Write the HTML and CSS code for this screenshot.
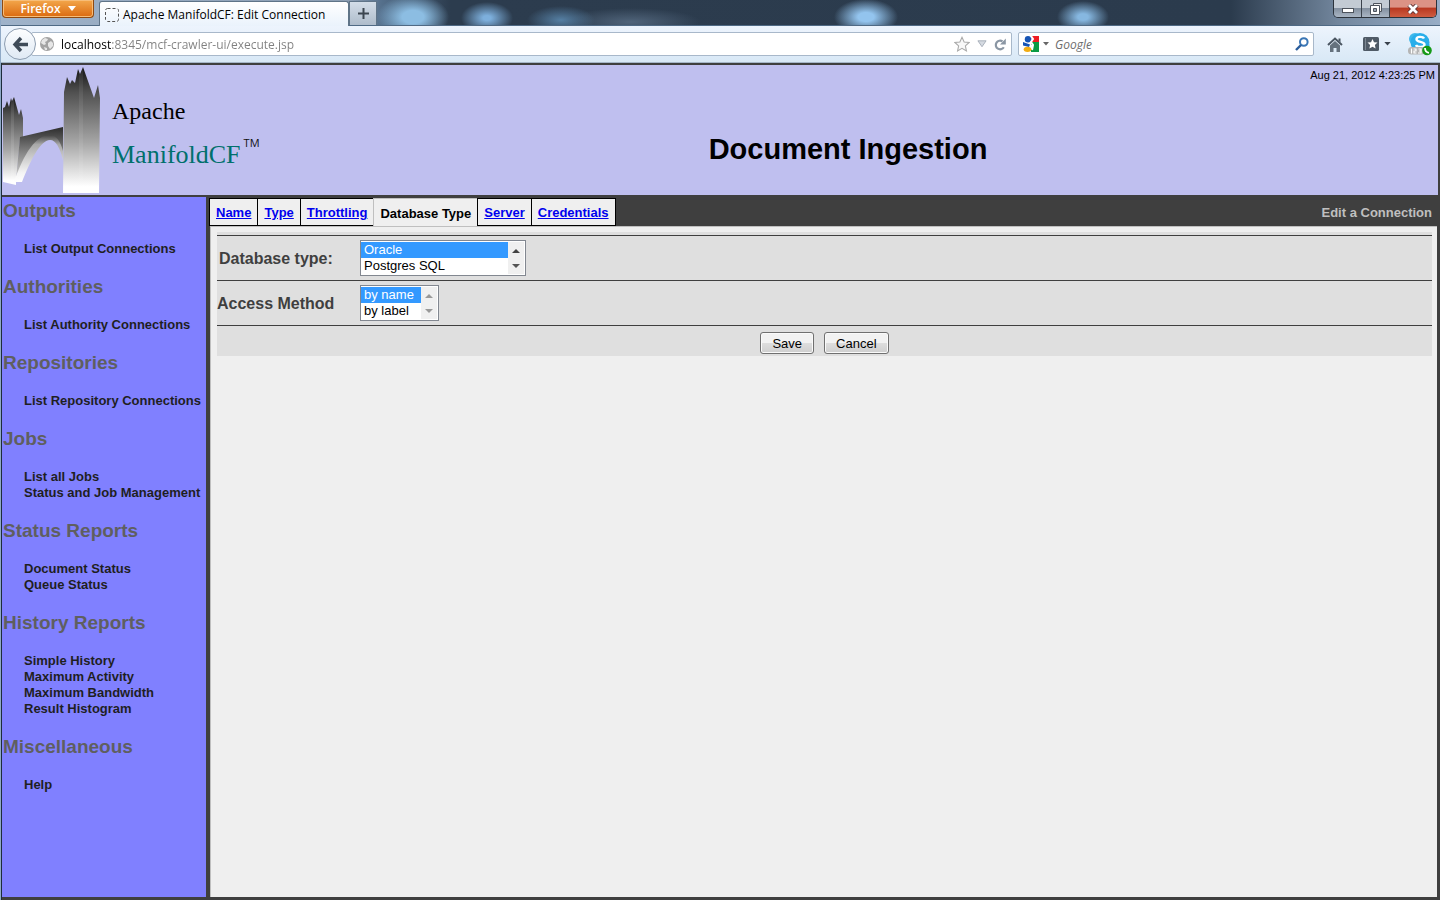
FILE: index.html
```html
<!DOCTYPE html>
<html lang="en">
<head>
<meta charset="utf-8">
<title>Apache ManifoldCF: Edit Connection</title>
<link rel="stylesheet" href="styles.css">
</head>
<body>
<header class="titlebar">
  <button class="firefox" type="button">Firefox
    <svg width="8" height="5" viewBox="0 0 8 5"><path d="M0 0h8L4 5z" fill="#fff"/></svg>
  </button>
  <div class="browser-tab">
    <svg width="14" height="14" viewBox="0 0 14 14"><rect x=".5" y=".5" width="13" height="13" rx="2" fill="none" stroke="#555" stroke-dasharray="3 2"/></svg>
    <span>Apache ManifoldCF: Edit Connection</span>
  </div>
  <button class="new-tab" type="button" aria-label="New tab">
    <svg width="11" height="11" viewBox="0 0 11 11"><path d="M5.5 0v11M0 5.5h11" stroke="#3c4650" stroke-width="2"/></svg>
  </button>
  <div class="window-buttons">
    <button type="button" class="win min" aria-label="Minimize"><svg width="12" height="5" viewBox="0 0 12 5"><rect x=".5" y=".5" width="11" height="4" fill="#fff" stroke="#4d535c"/></svg></button>
    <button type="button" class="win max" aria-label="Restore"><svg width="12" height="12" viewBox="0 0 12 12"><path d="M3.5 .5h8v8h-8z" fill="#eee" stroke="#4d535c"/><path d="M.5 2.500h9v9h-9z" fill="#fff" stroke="#4d535c"/><path d="M3.500 5.500h3v3h-3z" fill="#9aa4b0" stroke="#4d535c"/></svg></button>
    <button type="button" class="win close" aria-label="Close"><svg width="12" height="10" viewBox="0 0 12 10"><path d="M2 1l8 8M10 1L2 9" stroke="#5b3030" stroke-width="4.500"/><path d="M2 1l8 8M10 1L2 9" stroke="#fff" stroke-width="2.800"/></svg></button>
  </div>
</header>

<nav class="toolbar">
  <button class="back" type="button" aria-label="Back">
    <svg width="17" height="17" viewBox="0 0 17 17"><path d="M9 2L3 8.500 9 15M3 8.500h13" fill="none" stroke="#3f4b58" stroke-width="3.400"/></svg>
  </button>
  <div class="field url">
    <svg width="14" height="14" viewBox="0 0 14 14"><circle cx="7" cy="7" r="7" fill="#a3a3a3"/><path d="M2 3l3-2 3 1-1 2-2 1 1 2-2 1-3-2zM8 6l3-2 2 2v3l-3 3-2-3zM4 10l3 1v2l-2 0z" fill="#e6e6e6"/></svg>
    <input class="url-text" type="text" aria-label="Address" value="localhost:8345/mcf-crawler-ui/execute.jsp">
    <button class="plain" type="button" aria-label="Bookmark"><svg width="16" height="16" viewBox="0 0 18 17"><path d="M9 1l2.400 5.200 5.600.6-4.200 3.800 1.200 5.600-5-2.800-5 2.800 1.200-5.600L1 6.800l5.600-.6z" fill="#f8f8f8" stroke="#a9a9a9" stroke-width="1.200"/></svg></button>
    <button class="plain" type="button" aria-label="History"><svg width="10" height="8" viewBox="0 0 11 8"><path d="M1 .5h9L5.500 7z" fill="#d5dae1" stroke="#a3abb6"/></svg></button>
    <button class="plain" type="button" aria-label="Reload"><svg width="12" height="13" viewBox="0 0 12 13"><path d="M8.500 3.400A4.300 4.300 0 1 0 9.800 9.200" fill="none" stroke="#8a96a3" stroke-width="2.200"/><path d="M11.800 .5v6H6z" fill="#8a96a3"/></svg></button>
  </div>
  <div class="field search">
    <svg width="16" height="16" viewBox="0 0 16 16"><path d="M8 0h8v6H9z" fill="#ee1c23"/><path d="M8 6h8v10H8z" fill="#0a9a43"/><path d="M0 6h4l5 3v4H0z" fill="#fff"/><ellipse cx="5" cy="3.200" rx="3.200" ry="3.200" fill="#1554b5"/><path d="M0 6l7 2.500-1 2.500-6-1.500z" fill="#1554b5"/><path d="M8 0l2 3-2 3 2 3-1 5" fill="none" stroke="#fff" stroke-width="2"/><ellipse cx="4.500" cy="13.300" rx="3.800" ry="2.600" fill="#f2ad14"/></svg>
    <svg width="6" height="4" viewBox="0 0 6 4"><path d="M0 0h6L3 3.500z" fill="#666"/></svg>
    <input class="search-text" type="text" aria-label="Search" placeholder="Google">
    <button class="plain" type="button" aria-label="Go"><svg width="14" height="14" viewBox="0 0 14 14"><circle cx="8.800" cy="5" r="3.800" fill="none" stroke="#3a76b5" stroke-width="2"/><path d="M6 8L1 13" stroke="#2a5d9c" stroke-width="2.400"/></svg></button>
  </div>
  <button class="plain home" type="button" aria-label="Home"><svg width="16" height="15" viewBox="0 0 16 15"><path d="M1 8l7-6.500L15 8" fill="none" stroke="#4b5662" stroke-width="2"/><path d="M3 8.500L8 4l5 4.500V15H9.500v-4h-3v4H3z" fill="#65717d"/><path d="M11.500 1.500h2v4l-2-2z" fill="#4b5662"/></svg></button>
  <button class="plain marks" type="button" aria-label="Bookmarks"><svg width="16" height="14" viewBox="0 0 16 14"><rect width="16" height="14" rx="1.500" fill="#4f5a66"/><path d="M2.500 1v12" stroke="#7c8792"/><path d="M9.500 2l1.500 3.200 3.500.4-2.600 2.300.7 3.500-3.100-1.700-3.100 1.700.7-3.500L4.500 5.600 8 5.200z" fill="#fff"/></svg><svg width="7" height="4" viewBox="0 0 8 5"><path d="M0 0h8L4 4.500z" fill="#39424c"/></svg></button>
  <button class="plain skype" type="button" aria-label="Skype"><svg width="24" height="24" viewBox="0 0 24 24"><circle cx="7" cy="7" r="6" fill="#3fb8ec"/><circle cx="15" cy="14" r="6.500" fill="#18a0e0"/><circle cx="12" cy="10.500" r="9.500" fill="#29aeea"/><path d="M16 6.500c-1-2-7.500-2.500-7.500.8 0 3.400 8 1.900 8 5.200 0 3.300-7.500 3-8.500.5" fill="none" stroke="#fff" stroke-width="2.400"/><rect y="15" width="17" height="7.500" rx="3.500" fill="#b5b5b5"/><path d="M3.500 16.500v5M5.500 17H8v2H6v2h2.500M10.500 17H13v4h-3M11 19h2" fill="none" stroke="#fff" stroke-width="1.200"/><circle cx="19" cy="18.500" r="4.800" fill="#159a17"/><path d="M17 16c0 3 1.500 4.500 4 4.800" fill="none" stroke="#fff" stroke-width="1.800"/></svg></button>
</nav>

<div class="page">
  <div class="banner">
    <div class="logo">
      <svg class="bridge" width="98" height="130" viewBox="0 0 98 130">
        <defs>
          <linearGradient id="tower" x1="0" y1="0" x2="0" y2="1"><stop offset="0" stop-color="#141414"/><stop offset=".2" stop-color="#505050"/><stop offset=".6" stop-color="#a6a6a6"/><stop offset=".95" stop-color="#fff"/></linearGradient>
          <linearGradient id="deck" x1="0" y1="0" x2="0" y2="1"><stop offset="0" stop-color="#2c2c2c"/><stop offset=".5" stop-color="#888"/><stop offset="1" stop-color="#d5d5d5"/></linearGradient>
          <linearGradient id="arch" x1="0" y1="0" x2="0" y2="1"><stop offset="0" stop-color="#444"/><stop offset=".2" stop-color="#a8a8a8"/><stop offset=".8" stop-color="#f4f4f4"/><stop offset="1" stop-color="#fff"/></linearGradient>
        </defs>
        <path d="M1 117V43l2-1 2-6 2 6 2-9 1 3 2-4 5 18 2-6 2 9v19l-3 3-4 42v3z" fill="url(#tower)"/>
        <path d="M9 34l3-2v85H9z" fill="#fff" opacity=".1"/>
        <path d="M18 72L61 62V90C57 79 53 73 47 73 36 73 25 95 17 115h-3z" fill="url(#deck)"/>
        <path d="M12 117C22 88 34 70 48 70c7 0 11 8 13 16v9c-3-12-7-20-13-20C38 75 28 97 20 117z" fill="url(#arch)"/>
        <path d="M61 128L62 27l3-15 3 7 2-4 3 3 3-14 2 5 3-7 11 31 4-13 2 13-1 95z" fill="url(#tower)"/>
        <path d="M77 7l4-5v126h-4z" fill="#fff" opacity=".07"/>
      </svg>
      <div class="logo-words">
        <span class="apache">Apache</span>
        <span class="manifold">ManifoldCF<span class="tm">TM</span></span>
      </div>
    </div>
    <h1>Document Ingestion</h1>
    <time class="date">Aug 21, 2012 4:23:25 PM</time>
  </div>

  <div class="columns">
    <aside class="sidebar">
      <h2>Outputs</h2>
      <ul><li><a href="#">List Output Connections</a></li></ul>
      <h2>Authorities</h2>
      <ul><li><a href="#">List Authority Connections</a></li></ul>
      <h2>Repositories</h2>
      <ul><li><a href="#">List Repository Connections</a></li></ul>
      <h2>Jobs</h2>
      <ul><li><a href="#">List all Jobs</a></li><li><a href="#">Status and Job Management</a></li></ul>
      <h2>Status Reports</h2>
      <ul><li><a href="#">Document Status</a></li><li><a href="#">Queue Status</a></li></ul>
      <h2>History Reports</h2>
      <ul><li><a href="#">Simple History</a></li><li><a href="#">Maximum Activity</a></li><li><a href="#">Maximum Bandwidth</a></li><li><a href="#">Result Histogram</a></li></ul>
      <h2>Miscellaneous</h2>
      <ul><li><a href="#">Help</a></li></ul>
    </aside>

    <main class="main">
      <div class="tabs">
        <a class="tab" href="#">Name</a>
        <a class="tab" href="#">Type</a>
        <a class="tab" href="#">Throttling</a>
        <span class="tab active">Database Type</span>
        <a class="tab" href="#">Server</a>
        <a class="tab" href="#">Credentials</a>
        <span class="tabs-title">Edit a Connection</span>
      </div>
      <div class="panel">
        <form class="form">
          <div class="row">
            <label class="inset" for="dbtype">Database type:</label>
            <div class="listbox wide">
              <select id="dbtype" size="2"><option selected>Oracle</option><option>Postgres SQL</option></select>
              <span class="arrows"><svg width="8" height="4" viewBox="0 0 8 4"><path d="M4 0l4 4H0z" fill="#444"/></svg><svg width="8" height="4" viewBox="0 0 8 4"><path d="M0 0h8L4 4z" fill="#555"/></svg></span>
            </div>
          </div>
          <div class="row">
            <label for="access">Access Method</label>
            <div class="listbox">
              <select id="access" size="2"><option selected>by name</option><option>by label</option></select>
              <span class="arrows"><svg width="8" height="4" viewBox="0 0 8 4"><path d="M4 0l4 4H0z" fill="#999"/></svg><svg width="8" height="4" viewBox="0 0 8 4"><path d="M0 0h8L4 4z" fill="#999"/></svg></span>
            </div>
          </div>
          <div class="row actions">
            <button type="button">Save</button>
            <button type="button">Cancel</button>
          </div>
        </form>
      </div>
    </main>
  </div>
</div>
</body>
</html>
```
FILE: styles.css
```css
* { box-sizing: border-box; }

body {
  margin: 0;
  min-height: 100vh;
  display: flex;
  flex-direction: column;
  border-left: 1px solid #8fa9c6;
  background: #3f3f3f;
  font-family: "Liberation Sans", Arial, sans-serif;
}

button, input, select { font: inherit; margin: 0; }
svg { display: block; flex: none; }

/* Browser chrome */
.titlebar {
  display: flex;
  align-items: flex-start;
  height: 26px;
  padding: 0 3px 0 1px;
  border-bottom: 1px solid #4f6a85;
  background:
    radial-gradient(ellipse 36px 22px at 412px 17px, #8cbde2 30%, rgba(140, 189, 226, 0)),
    radial-gradient(ellipse 26px 16px at 486px 18px, #7dafdc 15%, rgba(125, 175, 220, 0)),
    radial-gradient(ellipse 34px 14px at 560px 20px, #557fa3, rgba(85, 127, 163, 0)),
    radial-gradient(ellipse 70px 14px at 630px 22px, #50647a, rgba(80, 100, 122, 0)),
    radial-gradient(ellipse 32px 18px at 865px 17px, #93c4ee 25%, rgba(147, 196, 238, 0)),
    radial-gradient(ellipse 26px 16px at 1082px 17px, #86b7e0 20%, rgba(134, 183, 224, 0)),
    linear-gradient(to right, #9fb3ca 0, #8b9db2 350px, #55708c 380px, #2c3c4e 450px, #2b3b4d 1230px, #74889f 1340px, #98adc6 100%);
  font-family: "Open Sans", "Noto Sans", sans-serif;
  font-size: 12px;
}

.firefox {
  display: flex;
  align-items: center;
  justify-content: center;
  gap: 7px;
  width: 92px;
  height: 18px;
  padding: 0;
  border: 1px solid #8e4a12;
  border-top: 0;
  border-radius: 0 0 4px 4px;
  background: linear-gradient(#f3a74b, #db6a10);
  box-shadow: inset 0 0 0 1px #f7bd78;
  color: #fff;
  font-weight: 600;
}

.browser-tab {
  display: flex;
  align-items: center;
  gap: 4px;
  width: 250px;
  height: 25px;
  margin: 1px 0 0 5px;
  padding: 1px 5px 0;
  border: 1px solid #5f7488;
  border-bottom: 0;
  border-radius: 3px 3px 0 0;
  background: linear-gradient(#fff, #eaf3fc);
  white-space: nowrap;
}

.new-tab {
  display: grid;
  place-items: center;
  width: 28px;
  height: 24px;
  margin-top: 1px;
  padding: 0;
  border: 1px solid #5f7488;
  border-bottom: 0;
  background: linear-gradient(#d3dde8, #aebccb);
}

.window-buttons {
  display: flex;
  height: 18px;
  margin-left: auto;
  border: 1px solid #2c333c;
  border-top: 0;
  border-radius: 0 0 5px 5px;
  overflow: hidden;
}

.win {
  display: grid;
  place-items: center;
  width: 28px;
  padding: 0;
  border: 0;
  border-right: 1px solid #3a424c;
  background: linear-gradient(#c3cbd4 45%, #8390a0 50%, #aab6c4);
}

.min { align-items: end; padding-bottom: 4px; }

.close {
  width: 46px;
  border-right: 0;
  background: linear-gradient(#dc9385 40%, #b93a22 50%, #cf5c40);
}

.toolbar {
  display: flex;
  align-items: center;
  height: 37px;
  padding: 0 8px 0 3px;
  border-bottom: 1px solid #a5b6c8;
  background: linear-gradient(#edf4fd, #d8e8f6);
  font-family: "Open Sans", "Noto Sans", sans-serif;
  font-size: 12px;
}

.back {
  z-index: 1;
  display: grid;
  place-items: center;
  width: 32px;
  height: 32px;
  margin-right: -5px;
  padding: 0;
  border: 1px solid #8d9db0;
  border-radius: 50%;
  background: linear-gradient(#fdfeff, #dfe9f4);
}

.field {
  display: flex;
  align-items: center;
  height: 24px;
  border: 1px solid #a8b8ca;
  border-radius: 2px;
  background: #fff;
}

.field input {
  flex: 1;
  min-width: 0;
  padding: 0;
  border: 0;
  outline: 0;
  background: transparent;
}

.url { flex: 1; gap: 7px; padding: 0 5px 0 8px; }

/* host in black, the rest of the address in grey */
.field .url-text {
  background: linear-gradient(to right, #000 50px, #808080 50px);
  -webkit-background-clip: text;
  background-clip: text;
  color: transparent;
}

.search { width: 296px; margin-left: 6px; gap: 4px; padding: 0 4px; }
.search-text { margin-left: 2px; font-style: italic; }
.search-text::placeholder { color: #6d6d6d; opacity: 1; }

.plain {
  display: flex;
  align-items: center;
  gap: 5px;
  padding: 0;
  border: 0;
  background: none;
}

.home { margin-left: 13px; }
.marks { margin-left: 20px; }
.skype { margin-left: 17px; }

/* Page */
.page {
  flex: 1;
  display: flex;
  flex-direction: column;
  gap: 2px;
  padding: 2px 2px 3px 0;
  border-left: 1px solid #1d2c3b;
}

.banner {
  position: relative;
  display: flex;
  height: 130px;
  background: #bfbfef;
}

.logo { display: flex; width: 256px; }

.logo-words {
  display: flex;
  flex-direction: column;
  gap: 10px;
  padding: 30px 0 0 12px;
  font-family: "Liberation Serif", serif;
  white-space: nowrap;
}

.apache { font-size: 24px; line-height: 32px; color: #000; }
.manifold { display: flex; font-size: 26px; line-height: 36px; color: #00706c; }
.tm { padding-left: 3px; font: 11px/12px "Open Sans", sans-serif; color: #111; }

.banner h1 {
  flex: 1;
  margin: 0;
  padding-top: 66px;
  font-size: 29px;
  line-height: 36px;
  text-align: center;
}

.date {
  position: absolute;
  top: 4px;
  right: 3px;
  font-size: 11px;
  line-height: 12px;
}

.columns { flex: 1; display: flex; gap: 3px; }

.sidebar {
  width: 204px;
  padding: 3px 0 0 1px;
  background: #8080ff;
  white-space: nowrap;
}

.sidebar h2 {
  margin: 0;
  color: #5f5f5f;
  font-size: 19px;
  line-height: 22px;
}

.sidebar ul {
  margin: 0;
  padding: 19px 0 19px 21px;
  list-style: none;
  font-size: 13px;
  font-weight: bold;
  line-height: 16px;
}

.sidebar a { color: #1f1f1f; text-decoration: none; }

.main {
  flex: 1;
  display: flex;
  flex-direction: column;
  padding-top: 1px;
}

.tabs {
  display: flex;
  height: 28px;
  font-size: 13px;
  font-weight: bold;
  line-height: 29px;
}

.tab {
  padding: 0 6px;
  border: 1px solid #000;
  border-right: 0;
  background: #efefef;
  color: #0000ee;
  line-height: 27px;
}

.tab:nth-child(6) { border-right: 1px solid #000; }

.tab.active {
  border-color: #bfbfbf;
  border-bottom: 0;
  color: #000;
  line-height: 29px;
}

.tabs-title { margin-left: auto; padding-right: 6px; color: #bfbfbf; }

.panel {
  flex: 1;
  margin: 0 1px;
  padding: 5px 5px 0 6px;
  border: 1px solid #bfbfbf;
  border-width: 1px 0 0 1px;
  background: #efefef;
}

.form { padding-top: 3px; background: #dfdfdf; }

.row {
  display: flex;
  align-items: center;
  height: 45px;
  border-top: 1px solid #3f3f3f;
}

.row label {
  width: 143px;
  padding-top: 2px;
  color: #3f3f3f;
  font-size: 16px;
  font-weight: bold;
}

.row .inset { padding-left: 2px; }

.listbox {
  display: flex;
  width: 79px;
  height: 36px;
  padding: 1px 1px 1px 0;
  border: 1px solid #828790;
  background: #fff;
}

.wide { width: 166px; }

.listbox select {
  flex: 1;
  min-width: 0;
  padding: 0;
  border: 0;
  border-radius: 0;
  outline: 0;
  overflow: hidden;
  background: #fff;
  color: #000;
  font-size: 13px;
}

.listbox option { min-height: 16px; padding: 0 3px; line-height: 16px; }
.listbox option:checked { background: #3399ff linear-gradient(#3399ff, #3399ff); color: #fff; }

.arrows {
  display: flex;
  flex-direction: column;
  align-items: center;
  justify-content: space-between;
  width: 16px;
  padding: 7px 0 6px;
  background: #f0f0f0;
}

.row.actions {
  justify-content: center;
  gap: 10px;
  height: 31px;
  padding: 4px 0 0;
}

.actions button {
  height: 22px;
  padding: 0 11px;
  border: 1px solid #707070;
  border-radius: 3px;
  background: linear-gradient(#f2f2f2 48%, #dddddd 52%, #cfcfcf);
  box-shadow: inset 0 0 0 1px #fafafa;
  color: #000;
  font-size: 13px;
}
```
